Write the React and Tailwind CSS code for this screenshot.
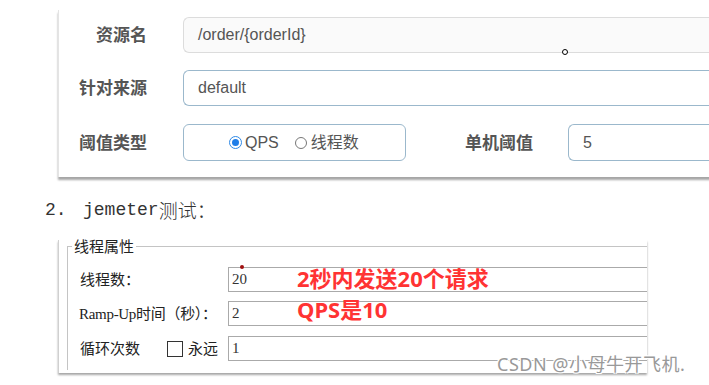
export default function App() {
  const sans = { fontFamily: '"Noto Sans", "Noto Sans CJK SC", sans-serif' }
  const arial = { fontFamily: '"Liberation Sans", "Noto Sans CJK SC", sans-serif' }
  return (
    <div className="relative h-[385px] w-[709px] overflow-hidden bg-white">
      {/* Sentinel rule form */}
      <div
        className="ml-[58px] mt-[10px] h-[167px] w-[700px] border-l border-[#e4e4e4] bg-white pt-[7px] shadow-[0_3px_2px_rgba(0,0,0,0.35)]"
        style={sans}
      >
        <div className="flex h-[36px] items-center">
          <div className="w-[88px] text-right text-[17px] font-bold text-[#555]">资源名</div>
          <div className="ml-[36px] flex h-[36px] flex-1 items-center rounded-l-[6px] border border-r-0 border-[#dcdcdc] bg-[#fafafa] pl-[14px] text-[16px] text-[#555]" style={arial}>
            /order/{'{'}orderId{'}'}
          </div>
        </div>
        <div className="mt-[17px] flex h-[36px] items-center">
          <div className="w-[88px] text-right text-[17px] font-bold text-[#555]">针对来源</div>
          <div className="ml-[36px] flex h-[36px] flex-1 items-center rounded-l-[6px] border border-r-0 border-[#9bb8cc] bg-white pl-[14px] text-[16px] text-[#555]" style={arial}>
            default
          </div>
        </div>
        <div className="mt-[18px] flex h-[37px] items-center">
          <div className="w-[88px] text-right text-[17px] font-bold text-[#555]">阈值类型</div>
          <div className="ml-[36px] flex h-[37px] w-[223px] items-center rounded-[6px] border border-[#9bb8cc] bg-white pl-[45px] text-[16px] text-[#555]" style={arial}>
            <span className="flex h-[13px] w-[13px] items-center justify-center rounded-full border border-[#2f8ae6]">
              <span className="h-[7px] w-[7px] rounded-full bg-[#1f7ee8]" />
            </span>
            <span className="ml-[3px]">QPS</span>
            <span className="ml-[16px] h-[12px] w-[12px] rounded-full border border-[#777]" />
            <span className="ml-[4px]">线程数</span>
          </div>
          <div className="ml-[59px] text-[17px] font-bold text-[#555]">单机阈值</div>
          <div className="ml-[35px] flex h-[37px] flex-1 items-center rounded-l-[6px] border border-r-0 border-[#9bb8cc] bg-white pl-[14px] text-[16px] text-[#555]" style={arial}>
            5
          </div>
        </div>
      </div>

      {/* cursor dot */}
      <div className="absolute left-[562px] top-[49px] h-[6px] w-[6px] rounded-full border border-black bg-white" />

      {/* heading */}
      <div
        className="ml-[45px] mt-[21px] flex items-center text-[18px] leading-[24px] text-[#333]"
        style={{ fontFamily: '"Liberation Mono", "Noto Sans CJK SC", monospace' }}
      >
        <span className="w-[38px]">2.</span>
        <span>jemeter</span>
        <span style={{ fontFamily: '"Noto Sans CJK SC", sans-serif' }} className="text-[19px] font-light">测试：</span>
      </div>

      {/* jmeter panel */}
      <div
        className="ml-[58px] mt-[18px] h-[133px] w-[589px] border-l border-[#d0d0d0] bg-white pl-[8px] pt-[6px] shadow-[0_2px_2px_rgba(0,0,0,0.35)]"
        style={{ fontFamily: '"Noto Sans CJK SC", sans-serif' }}
      >
        <div className="relative h-[124px] border-l border-t border-[#c4c4c4]">
          <div className="absolute -top-[11px] left-[4px] bg-white px-[2px] text-[15px] leading-[20px] text-[#222]">线程属性</div>
          <div className="flex h-full flex-col pt-[20px]">
            <div className="flex h-[25px] items-center">
              <div className="w-[160px] pl-[12px] text-[15px] text-[#222]">线程数：</div>
              <div className="relative flex h-[25px] flex-1 items-center border border-[#aaa] border-r-0 pl-[3px] text-[15px] text-[#333]" style={{ fontFamily: '"Liberation Serif", serif' }}>
                20
                <span className="absolute -top-[3px] left-[11px] h-[4px] w-[4px] rounded-full bg-[#a01010]" />
              </div>
            </div>
            <div className="mt-[9px] flex h-[25px] items-center">
              <div className="w-[160px] pl-[11px] text-[15px] tracking-[-0.3px] text-[#222]">
                <span style={{ fontFamily: '"Liberation Serif", serif' }}>Ramp-Up</span>时间（秒）：
              </div>
              <div className="flex h-[25px] flex-1 items-center border border-[#aaa] border-r-0 pl-[3px] text-[15px] text-[#333]" style={{ fontFamily: '"Liberation Serif", serif' }}>
                2
              </div>
            </div>
            <div className="mt-[10px] flex h-[25px] items-center">
              <div className="flex w-[160px] items-center pl-[12px] text-[15px] text-[#222]">
                <span>循环次数</span>
                <span className="ml-[27px] h-[16px] w-[16px] border border-[#333] bg-white" />
                <span className="ml-[5px]">永远</span>
              </div>
              <div className="flex h-[25px] flex-1 items-center border border-[#aaa] border-r-0 pl-[3px] text-[15px] text-[#333]" style={{ fontFamily: '"Liberation Serif", serif' }}>
                1
              </div>
            </div>
          </div>
        </div>
      </div>

      {/* red annotation */}
      <div
        className="absolute left-[297px] top-[263px] text-[22px] font-bold leading-[31px] text-[#ff3333]"
        style={{ fontFamily: '"Noto Sans", "Noto Sans CJK SC", sans-serif' }}
      >
        <div>2秒内发送20个请求</div>
        <div>QPS是10</div>
      </div>

      {/* watermark */}
      <div
        className="absolute left-[497px] top-[353px] text-[18px] leading-[22px] tracking-[0.5px] text-[#999]"
        style={{
          fontFamily: '"Noto Sans", "Noto Sans CJK SC", sans-serif',
          textShadow: '1px 1px 0 #fff, -1px -1px 0 #fff, 1px -1px 0 #fff, -1px 1px 0 #fff',
        }}
      >
        CSDN @小母牛开飞机.
      </div>
    </div>
  )
}
